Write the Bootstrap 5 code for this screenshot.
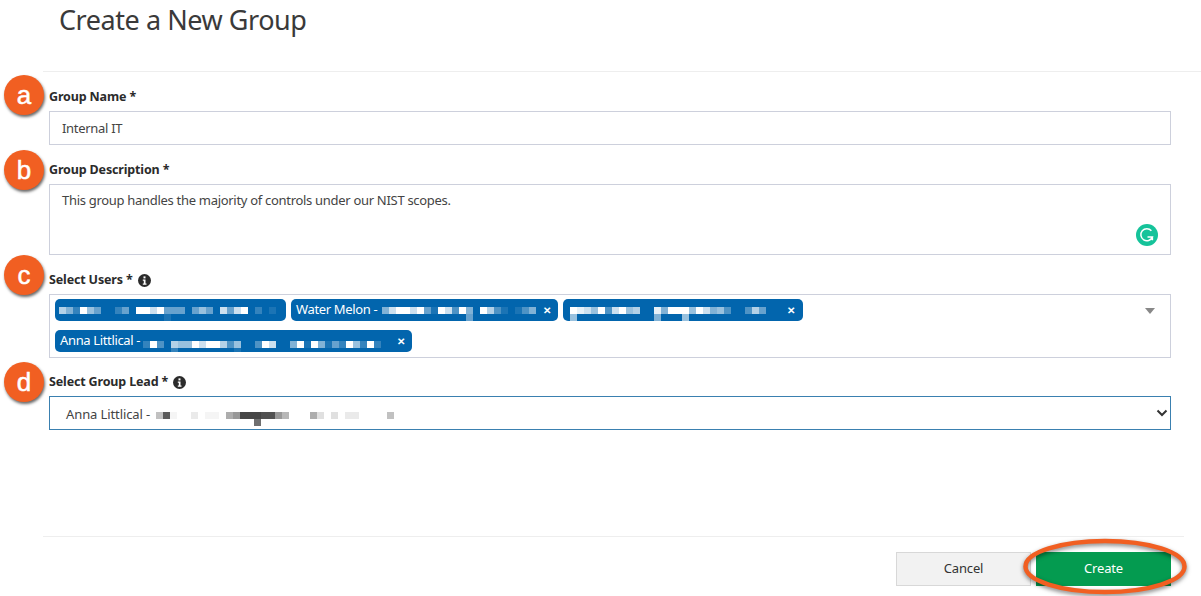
<!DOCTYPE html>
<html lang="en">

<head>
  <meta charset="UTF-8" />
  <meta name="viewport" content="width=device-width, initial-scale=1.0" />
  <title>Create a New Group</title>
  <link href="https://cdn.jsdelivr.net/npm/bootstrap@5.3.3/dist/css/bootstrap.min.css" rel="stylesheet">
  <style>
    body { font-family: "Noto Sans", sans-serif; font-size: 13px; color: #333; background: #fff; overflow: hidden; height: 596px; position: relative; }
    .page-head { height: 72px; margin-left: 43px; padding-left: 16px; border-bottom: 1px solid #eee; }
    .page-head h1 { font-family: "Noto Sans", sans-serif; font-size: 27px; line-height: 39px; letter-spacing: -.45px; margin: 0; color: #3a3a3a; font-weight: 400; }
    .group-form { padding: 0 30px 0 49px; }
    .field-label { display: flex; align-items: center; gap: 5px; font-weight: 700; font-size: 12.5px; line-height: 18px; letter-spacing: -.15px; color: #2b2b2b; margin: 0 0 5px; }
    .group-form .form-control, .group-form .form-select { border-radius: 0; border: 1px solid #cdd0dc; font-size: 13px; letter-spacing: -.3px; color: #444; box-shadow: none; }
    .name-input { height: 34px; padding: 0 12px; margin-bottom: 16px; }
    .desc-wrap { height: 71px; margin-bottom: 16px; position: relative; }
    .desc-input { height: 71px; padding: 6px 12px; resize: none; }
    .grammarly { position: absolute; right: 13px; bottom: 9px; }
    .users-box { border: 1px solid #cdd0dc; height: 64px; padding: 4px 5px; margin-bottom: 15px; position: relative; }
    .users-chips { display: flex; flex-wrap: wrap; gap: 9px 5px; width: 760px; }
    .user-chip { display: inline-flex; align-items: center; height: 22px; padding: 0 6px 0 5px; background: #0265ad; color: #fff; border-radius: 5px; font-size: 13px; letter-spacing: -.35px; white-space: nowrap; }
    .chip-first { padding: 0 10px 0 4px; }
    .chip-third { padding: 0 7px; }
    .chip-x { font-size: 10px; font-weight: 700; margin-left: 7px; width: 9px; line-height: 1; letter-spacing: 0; }
    .chip-third .chip-x { margin-left: 14px; }
    .chip-fourth .chip-x { margin-left: 9px; }
    .users-caret { position: absolute; right: 15px; top: 13px; width: 0; height: 0; border-left: 5px solid transparent; border-right: 5px solid transparent; border-top: 6px solid #888; }
    .group-form .lead-select { height: 34px; padding: 4px 16px 0; border-color: #3a80b0; letter-spacing: -.1px; display: flex; align-items: center; white-space: nowrap; background-image: url("data:image/svg+xml,%3csvg xmlns='http://www.w3.org/2000/svg' viewBox='0 0 12 10'%3e%3cpath fill='none' stroke='%23333' stroke-width='2' d='M1.5 2.5 6 7l4.5-4.5'/%3e%3c/svg%3e"); background-position: right 2px center; background-size: 12px 10px; }
    .px-blur { display: inline-flex; margin-left: 5px; }
    .px-blur i { display: block; width: 7px; height: 7px; }
    .chip-first .px-blur, .chip-third .px-blur { margin-left: 0; }
    .chip-fourth .px-blur { margin: 6px 0 0 3px; }
    .lead-select .px-blur { margin-left: 6px; }
    .page-foot { position: absolute; top: 536px; left: 43px; right: 17px; border-top: 1px solid #eee; }
    .foot-btns { display: flex; justify-content: flex-end; gap: 5px; padding: 15px 13px 0 0; }
    .foot-btns .btn { width: 135px; height: 34px; border-radius: 0; font-size: 13px; letter-spacing: -.15px; padding: 0; }
    .btn-cancel { background: #f2f2f2; border: 1px solid #d8d8d8; color: #333; }
    .btn-create { background: #049b50; border: 1px solid #049b50; color: #fff; }
    .step-mark { position: absolute; left: 4px; width: 40px; height: 40px; border-radius: 50%; background: #f15f22; color: #fff; font-family: "Liberation Sans", sans-serif; font-size: 26px; line-height: 40px; text-align: center; -webkit-text-stroke: .5px #fff; box-shadow: 1px 2px 3px rgba(0, 0, 0, .6); }
    .mark-a { top: 75px; }
    .mark-b { top: 150px; }
    .mark-c { top: 255px; }
    .mark-d { top: 362px; }
    .create-ring { position: absolute; left: 1022px; top: 538px; filter: drop-shadow(0 2px 2px rgba(0, 0, 0, .5)); }
  </style>
</head>

<body>
  <div class="page-head">
    <h1>Create a New Group</h1>
  </div>

  <form class="group-form pt-3">
    <label class="field-label" for="groupName">Group Name *</label>
    <input id="groupName" class="form-control name-input" value="Internal IT" />

    <label class="field-label" for="groupDesc">Group Description *</label>
    <div class="desc-wrap">
      <textarea id="groupDesc" class="form-control desc-input">This group handles the majority of controls under our NIST scopes.</textarea>
      <svg class="grammarly" width="22" height="22" viewBox="0 0 22 22">
        <circle cx="11" cy="11" r="11" fill="#15c39a" />
        <path d="M15.4 6.8A6 6 0 1 0 16.4 13H11.5M16.4 13v3.2" fill="none" stroke="#fff" stroke-width="1.5" />
      </svg>
    </div>

    <div class="field-label">Select Users *
      <svg width="13" height="13" viewBox="0 0 13 13">
        <circle cx="6.5" cy="6.5" r="6.5" fill="#2b2b2b" />
        <rect x="5.5" y="2.4" width="2" height="2" fill="#fff" />
        <path d="M4.8 5.5h2.7v4h1v1.2H4.8V9.5h1V6.7h-1z" fill="#fff" />
      </svg>
    </div>
    <div class="users-box">
      <div class="users-chips">
        <span class="user-chip chip-first"><span class="px-blur" data-px=".7 .5 .2 1 .6 .4 0 0 .2 .4 0 1 1 .8 1 .4:.1 .4 .4 0 .4 .6 .4 0 .8 .4 .8 1 0 .2 0 .1"></span></span>
        <span class="user-chip">Water Melon - <span class="px-blur" data-px=".5 .8 1 1 .8 1 .4 .1 1 .8 .3 1 .5:.4 0 1 .7 .3 .1 0 .1 .3 .5"></span><span class="chip-x">✕</span></span>
        <span class="user-chip chip-third"><span class="px-blur" data-px="1:.6 .9 .8 .6 1 .3 .8 1 .6 .7 0 0 .9:.5 .5 1 1 1:.6 .6 1 .8 .5 .6 .3 0 0 .3 .7 .4 0"></span><span class="chip-x">✕</span></span>
        <span class="user-chip chip-fourth">Anna Littlical - <span class="px-blur" data-px=".2 1 .3 0 .7:.2 .6 .6 1 .8 1 1 .7 .3 .6:.1 0 0 .3 1 .8 0 0 .5 1 .1 1 .5 .1 .4 .2 1 .6 .2 1 .2 0"></span><span class="chip-x">✕</span></span>
      </div>
      <span class="users-caret"></span>
    </div>

    <div class="field-label">Select Group Lead *
      <svg width="13" height="13" viewBox="0 0 13 13">
        <circle cx="6.5" cy="6.5" r="6.5" fill="#2b2b2b" />
        <rect x="5.5" y="2.4" width="2" height="2" fill="#fff" />
        <path d="M4.8 5.5h2.7v4h1v1.2H4.8V9.5h1V6.7h-1z" fill="#fff" />
      </svg>
    </div>
    <div class="form-select lead-select">Anna Littlical - <span class="px-blur dark-px" data-px=".3 .8 .05 0 0 .1 0 .05 .05 0 .4 .5 .9 .9 .9:.7 .85 .85 .5 .35 0 0 0 .4 .15 0 .15 0 .1 .1 0 0 0 0 .3"></span></div>
  </form>

  <div class="page-foot">
    <div class="foot-btns">
      <button class="btn btn-cancel">Cancel</button>
      <button class="btn btn-create">Create</button>
    </div>
  </div>

  <span class="step-mark mark-a">a</span>
  <span class="step-mark mark-b">b</span>
  <span class="step-mark mark-c">c</span>
  <span class="step-mark mark-d">d</span>

  <svg class="create-ring" width="166" height="58" viewBox="0 0 166 58">
    <ellipse cx="83" cy="28.5" rx="79.5" ry="25.5" fill="none" stroke="#f15f22" stroke-width="4.5" />
  </svg>

  <script>
    // redacted emails: "a:b" is a pixel with a second one under it
    document.querySelectorAll(".px-blur").forEach((row) => {
      const rgb = row.classList.contains("dark-px") ? "50,50,50" : "255,255,255";
      row.dataset.px.split(" ").forEach((val) => {
        const [top, under] = val.split(":");
        const pixel = document.createElement("i");
        pixel.style.background = `rgba(${rgb},${top})`;
        if (under) pixel.style.boxShadow = `0 7px 0 rgba(${rgb},${under})`;
        row.appendChild(pixel);
      });
    });
  </script>
</body>

</html>
